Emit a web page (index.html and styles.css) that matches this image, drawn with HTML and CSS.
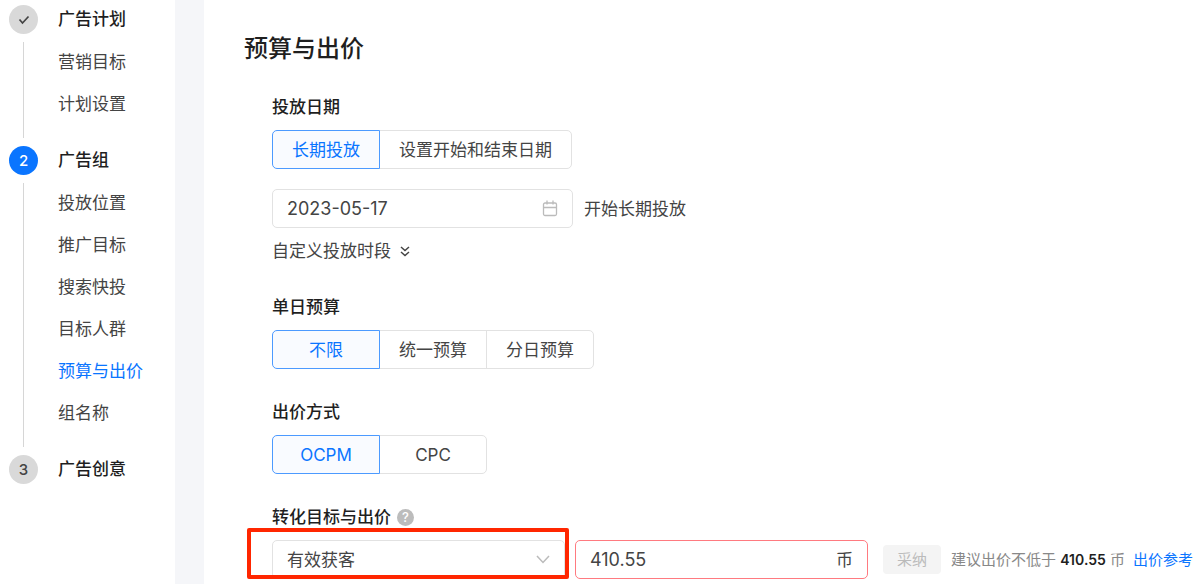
FILE: index.html
```html
<!DOCTYPE html>
<html lang="zh-CN">
	<head>
		<meta charset="UTF-8">
		<meta name="viewport" content="width=device-width, initial-scale=1">
		<title>预算与出价</title>
		<link rel="stylesheet" href="styles.css">
	</head>
	<body>

		<div class="page">
			<nav class="side">
				<div class="step">
					<div class="mark">
						<span class="dot">
							<svg width="12" height="10" viewBox="0 0 12 10"><path d="M1.500 4.500l3 3.500L10.500 1.500" fill="none" stroke="#444" stroke-width="1.7"/></svg>
						</span>
					</div>
					<div class="step-body">
						<h3>广告计划</h3>
						<ul>
							<li><a href="#">营销目标</a></li>
							<li><a href="#">计划设置</a></li>
						</ul>
					</div>
				</div>
				<div class="step">
					<div class="mark"><span class="dot dot-on">2</span></div>
					<div class="step-body">
						<h3>广告组</h3>
						<ul>
							<li><a href="#">投放位置</a></li>
							<li><a href="#">推广目标</a></li>
							<li><a href="#">搜索快投</a></li>
							<li><a href="#">目标人群</a></li>
							<li><a href="#" class="active">预算与出价</a></li>
							<li><a href="#">组名称</a></li>
						</ul>
					</div>
				</div>
				<div class="step">
					<div class="mark"><span class="dot">3</span></div>
					<div class="step-body">
						<h3>广告创意</h3>
					</div>
				</div>
			</nav>

			<main class="main">
				<h2>预算与出价</h2>

				<!-- 投放日期 -->
				<fieldset class="field">
					<legend>投放日期</legend>
					<div class="seg">
						<label><input type="radio" name="date" checked>长期投放</label>
						<label><input type="radio" name="date">设置开始和结束日期</label>
					</div>
					<div class="row date-row">
						<div class="box date">
							<input type="text" id="start" value="2023-05-17">
							<svg width="16" height="17" viewBox="0 0 16 17" fill="none" stroke="#bbb" stroke-width="1.3"><rect x="1.500" y="3" width="13" height="12.500" rx="1.500"/><path d="M1.500 7.500h13M5 .5v4M11 .5v4"/></svg>
						</div>
						<label for="start">开始长期投放</label>
					</div>
					<button type="button" class="more">自定义投放时段
						<svg width="10" height="11" viewBox="0 0 10 11" fill="none" stroke="#444" stroke-width="1.5"><path d="M1 1l4 3.500L9 1M1 6l4 3.500L9 6"/></svg>
					</button>
				</fieldset>

				<!-- 单日预算 -->
				<fieldset class="field">
					<legend>单日预算</legend>
					<div class="seg">
						<label><input type="radio" name="budget" checked>不限</label>
						<label><input type="radio" name="budget">统一预算</label>
						<label><input type="radio" name="budget">分日预算</label>
					</div>
				</fieldset>

				<!-- 出价方式 -->
				<fieldset class="field">
					<legend>出价方式</legend>
					<div class="seg">
						<label><input type="radio" name="bid" checked>OCPM</label>
						<label><input type="radio" name="bid">CPC</label>
					</div>
				</fieldset>

				<!-- 转化目标与出价 -->
				<fieldset class="field">
					<legend>转化目标与出价
						<span class="help">?</span>
					</legend>
					<div class="row">
						<div class="box target">
							<select aria-label="转化目标">
								<option>有效获客</option>
							</select>
							<svg width="14" height="9" viewBox="0 0 14 9" fill="none" stroke="#bbb" stroke-width="1.500"><path d="M1 1l6 6.500L13 1"/></svg>
						</div>
						<div class="box price">
							<input type="text" id="price" aria-label="出价" value="410.55">
							<label for="price">币</label>
						</div>
						<button type="button" class="adopt" disabled>采纳</button>
						<p class="tip">建议出价不低于 <b>410.55</b> 币</p>
						<a href="#" class="ref">出价参考</a>
					</div>
				</fieldset>
			</main>
		</div>

	</body>
</html>
```

FILE: styles.css
```css
*{
	margin: 0;
	padding: 0;
	box-sizing: border-box;
}
body{
	font: 17px/24px Inter, "Noto Sans CJK SC", sans-serif;
	color: #444;
	background: #fff;
	overflow: hidden;
}
a{
	color: inherit;
	text-decoration: none;
}
ul{
	list-style: none;
}
input,select,button{
	font: inherit;
	color: inherit;
	border: none;
	outline: none;
	background: none;
}
.page{
	display: flex;
	min-height: 100vh;
}

/* 左侧步骤 */
.side{
	flex: none;
	width: 204px;
	padding: 5px 0 0 9px;
	border-right: 29px solid #f5f6f9;
}
.step{
	display: flex;
	gap: 20px;
}
.mark{
	display: flex;
	flex-direction: column;
	align-items: center;
}
.step:not(:last-child) .mark::after{
	content: '';
	flex: 1;
	width: 1px;
	margin: 8px 0;
	background: #d6d6d6;
}
.dot{
	display: flex;
	align-items: center;
	justify-content: center;
	width: 29px;
	height: 29px;
	border-radius: 50%;
	font-size: 15px;
	font-weight: 500;
	background: #d9d9d9;
}
.dot-on{
	color: #fff;
	background: #0a75ff;
}
.step h3{
	font-size: 17px;
	font-weight: 500;
	line-height: 29px;
	color: #1f1f1f;
}
.step ul{
	padding: 7px 0 21px;
}
.step li{
	line-height: 42px;
}
.step .active{
	color: #0a75ff;
}

/* 右侧表单 */
.main{
	flex: 1;
	min-width: 0;
	padding: 31px 0 0 40px;
}
h2{
	margin-bottom: 28px;
	font-size: 24px;
	font-weight: 500;
	line-height: 36px;
	color: #1f1f1f;
}
.field{
	margin: 0 0 31px 28px;
	border: none;
}
legend{
	display: flex;
	align-items: center;
	gap: 6px;
	margin-bottom: 11px;
	font-weight: 500;
	color: #1f1f1f;
}
.seg{
	display: flex;
}
.seg label{
	display: flex;
	align-items: center;
	justify-content: center;
	min-width: 108px;
	height: 39px;
	padding: 0 19px;
	border: 1px solid #e2e2e2;
}
.seg label+label{
	margin-left: -1px;
}
.seg label:first-child{
	border-radius: 5px 0 0 5px;
}
.seg label:last-child{
	border-radius: 0 5px 5px 0;
}
.seg label:has(:checked){
	z-index: 1;
	color: #0a75ff;
	border-color: #4c9aff;
	background: #f9fbff;
}
.seg input{
	appearance: none;
	width: 0;
	height: 0;
}
.row{
	display: flex;
	align-items: center;
}
.box{
	display: flex;
	align-items: center;
	height: 39px;
	padding: 0 14px;
	border: 1px solid #e2e2e2;
	border-radius: 5px;
}
.box input,.box select{
	flex: 1;
	min-width: 0;
	appearance: none;
}
.box input{
	font-size: 18px;
}
.date-row{
	gap: 11px;
	margin: 20px 0 10px;
}
.date{
	width: 301px;
}
.more{
	display: flex;
	align-items: center;
	gap: 9px;
	line-height: 26px;
}
.help{
	width: 17px;
	height: 17px;
	border-radius: 50%;
	font-size: 13px;
	line-height: 17px;
	text-align: center;
	color: #fff;
	background: #bcbcbc;
}
.target,.price{
	width: 293px;
}
.target{
	position: relative;
	margin-right: 10px;
}
/* 红色标注框 */
.target::after{
	content: '';
	position: absolute;
	inset: -13px -5px -1px -26px;
	border: 4px solid #ff2600;
	border-radius: 2px;
	pointer-events: none;
}
.price{
	border-color: #ff7a80;
}
.adopt{
	width: 58px;
	height: 29px;
	margin: 0 10px 0 15px;
	border-radius: 4px;
	font-size: 15px;
	color: #bbb;
	background: #f4f4f4;
}
.tip,.ref{
	font-size: 15px;
	white-space: nowrap;
}
.tip{
	margin-right: 8px;
	color: #888;
}
.tip b{
	font-size: 14px;
	font-weight: 600;
	color: #1f1f1f;
}
.ref{
	color: #0a75ff;
}
```
